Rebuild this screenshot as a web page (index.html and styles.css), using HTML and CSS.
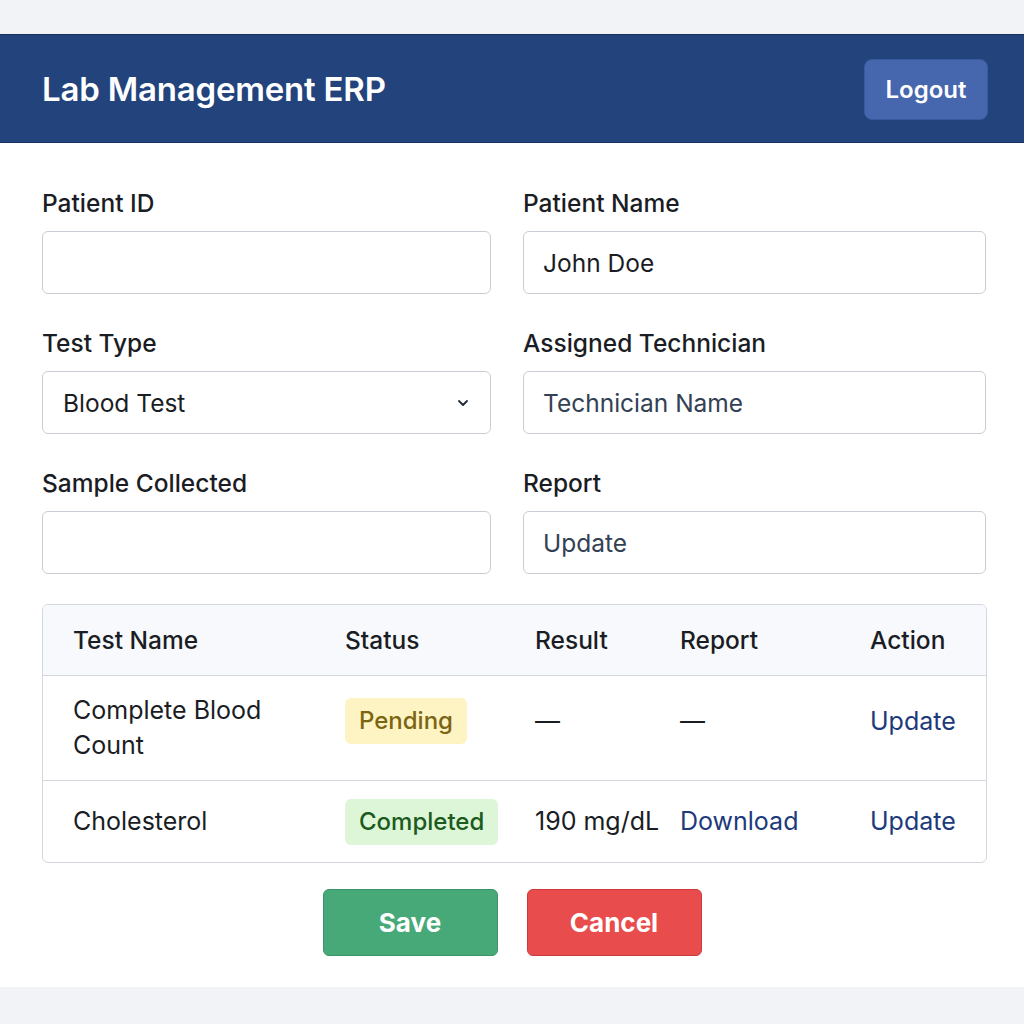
FILE: index.html
```html
<!DOCTYPE html>
<html lang="en">
<head>
    <meta charset="UTF-8">
    <meta name="viewport" content="width=device-width, initial-scale=1.0">
    <title>Lab Management ERP</title>
    <link rel="stylesheet" href="styles.css">
</head>
<body>

    <!-- Barra superior -->
    <header class="topbar">
        <h1>Lab Management ERP</h1>
        <button class="logout-btn">Logout</button>
    </header>

    <main class="panel">
        <!-- Formulario -->
        <form class="lab-form">
            <div class="field">
                <label>Patient ID</label>
                <input type="text">
            </div>
            <div class="field">
                <label>Patient Name</label>
                <input type="text" value="John Doe">
            </div>
            <div class="field">
                <label>Test Type</label>
                <div class="select-box">
                    <span>Blood Test</span>
                    <svg width="14" height="10" viewBox="0 0 14 10"><path d="M3 3l4 4 4-4" fill="none" stroke="#1f2937" stroke-width="1.8" stroke-linecap="round" stroke-linejoin="round"/></svg>
                </div>
            </div>
            <div class="field">
                <label>Assigned Technician</label>
                <input type="text" placeholder="Technician Name">
            </div>
            <div class="field">
                <label>Sample Collected</label>
                <input type="text">
            </div>
            <div class="field">
                <label>Report</label>
                <input type="text" placeholder="Update">
            </div>
        </form>

        <!-- Tabla de pruebas -->
        <div class="table-wrap">
            <table class="tests">
                <thead>
                    <tr>
                        <th class="c-name">Test Name</th>
                        <th class="c-status">Status</th>
                        <th class="c-result">Result</th>
                        <th class="c-report">Report</th>
                        <th>Action</th>
                    </tr>
                </thead>
                <tbody>
                    <tr class="row-tall">
                        <td class="c-name">Complete Blood<br>Count</td>
                        <td><span class="badge pending">Pending</span></td>
                        <td>&mdash;</td>
                        <td>&mdash;</td>
                        <td><a href="#">Update</a></td>
                    </tr>
                    <tr>
                        <td class="c-name">Cholesterol</td>
                        <td><span class="badge done">Completed</span></td>
                        <td>190 mg/dL</td>
                        <td><a href="#">Download</a></td>
                        <td><a href="#">Update</a></td>
                    </tr>
                </tbody>
            </table>
        </div>

        <div class="actions">
            <button class="btn save">Save</button>
            <button class="btn cancel">Cancel</button>
        </div>
    </main>

</body>
</html>
```

FILE: styles.css
```css
body {
    margin: 0;
    padding: 34px 0 0;
    background: #f2f3f7;
    font-family: 'Inter', 'Liberation Sans', sans-serif;
    color: #1a1d24;
}

/* BARRA SUPERIOR */
.topbar {
    height: 107px;
    background: #23437d;
    border-top: 1px solid #18305e;
    border-bottom: 1px solid #18305e;
    display: flex;
    align-items: center;
    justify-content: space-between;
    padding: 0 36px 0 42px;
}

.topbar h1 {
    margin: 0;
    color: #fff;
    font-size: 33px;
    font-weight: 600;
    letter-spacing: -0.2px;
}

.logout-btn {
    background: #4666ae;
    color: #fff;
    border: 1px solid #3a5a9e;
    border-radius: 8px;
    width: 124px;
    height: 61px;
    margin-top: 2px;
    font-family: inherit;
    font-size: 24px;
    font-weight: 600;
    cursor: pointer;
}

/* PANEL */
.panel {
    background: #fff;
    padding: 46px 38px 31px 42px;
}

.lab-form {
    display: grid;
    grid-template-columns: 449px 463px;
    column-gap: 32px;
    row-gap: 35px;
}

.field label {
    display: block;
    font-size: 24.5px;
    font-weight: 500;
    line-height: 28px;
    margin-bottom: 14px;
}

.field input,
.select-box {
    box-sizing: border-box;
    width: 100%;
    height: 63px;
    border: 1px solid #c9ced6;
    border-radius: 6px;
    padding: 0 19px;
    font-family: inherit;
    font-size: 24.5px;
    color: #1a1d24;
    background: #fff;
}

.field input::placeholder {
    color: #334155;
}

.select-box {
    display: flex;
    align-items: center;
    justify-content: space-between;
    padding-left: 20px;
    padding-right: 20px;
}

/* TABLA */
.table-wrap {
    margin-top: 30px;
    border: 1px solid #d3d8df;
    border-radius: 6px;
    overflow: hidden;
    width: 943px;
}

.tests {
    width: 100%;
    border-collapse: collapse;
    table-layout: fixed;
    font-size: 25px;
}

.tests th {
    background: #f7f9fc;
    font-size: 24.5px;
    font-weight: 500;
    text-align: left;
    height: 70px;
    padding: 0;
    border-bottom: 1px solid #d3d8df;
}

.tests td {
    padding: 0;
    height: 81px;
    line-height: 35px;
}

.tests .row-tall td {
    height: 90px;
    padding-bottom: 14px;
    border-bottom: 1px solid #d3d8df;
}

.tests .row-tall td.c-name {
    padding-bottom: 0;
    height: 104px;
}

.tests .c-name {
    width: 272px;
    padding-left: 30px;
}

.tests .c-status { width: 190px; }
.tests .c-result { width: 145px; }
.tests .c-report { width: 190px; }

.tests a {
    color: #1d3a7a;
    text-decoration: none;
}

.badge {
    display: inline-block;
    padding: 5px 14px;
    border-radius: 6px;
    font-size: 24px;
    font-weight: 500;
    line-height: 36px;
}

.badge.pending {
    background: #fdf3c3;
    color: #7b6512;
}

.badge.done {
    background: #dcf6d7;
    color: #1c5a20;
}

/* BOTONES */
.actions {
    display: flex;
    justify-content: center;
    gap: 29px;
    margin-top: 26px;
    margin-right: 4px;
}

.btn {
    width: 175px;
    height: 67px;
    border-radius: 6px;
    font-family: inherit;
    font-size: 26px;
    font-weight: 700;
    color: #fff;
    cursor: pointer;
}

.btn.save {
    background: #47a978;
    border: 1px solid #3a9467;
}

.btn.cancel {
    background: #e84c4c;
    border: 1px solid #cc3b3b;
}
```
